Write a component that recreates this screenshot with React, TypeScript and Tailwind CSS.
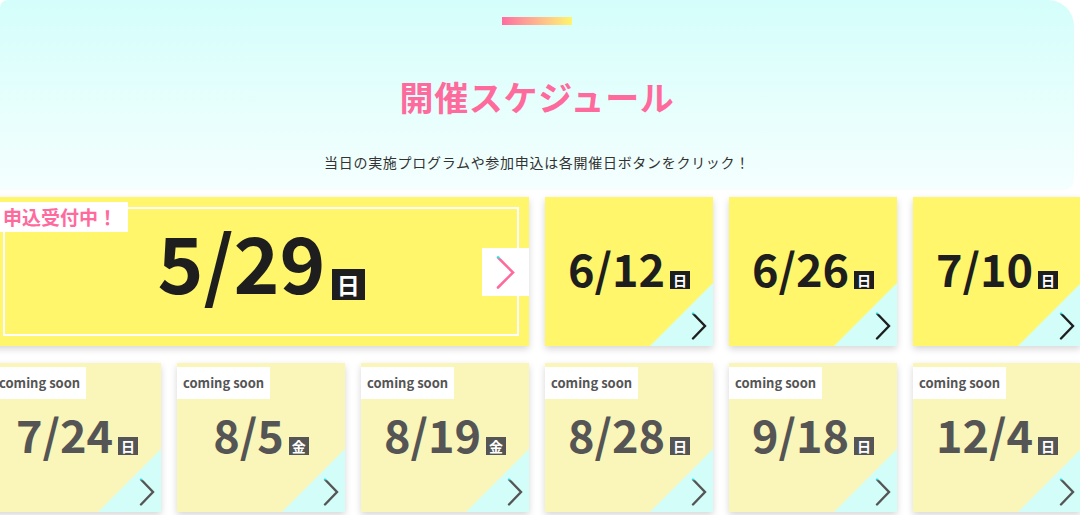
import { useId } from "react";

type Day = { date: string; day: string };

const open: Day[] = [
  { date: "6/12", day: "日" },
  { date: "6/26", day: "日" },
  { date: "7/10", day: "日" },
];

const soon: Day[] = [
  { date: "7/24", day: "日" },
  { date: "8/5", day: "金" },
  { date: "8/19", day: "金" },
  { date: "8/28", day: "日" },
  { date: "9/18", day: "日" },
  { date: "12/4", day: "日" },
];

const Chevron = ({
  color,
  w = 16,
  h = 28,
  stroke = 2.4,
}: {
  color: string;
  w?: number;
  h?: number;
  stroke?: number;
}) => {
  const id = useId();
  return (
    <svg width={w} height={h} viewBox={`0 0 ${w} ${h}`} fill="none">
      <defs>
        <linearGradient id={id} x1="0" y1="0" x2="0" y2={h} gradientUnits="userSpaceOnUse">
          <stop offset="0.05" stopColor="#35dce6" />
          <stop offset="0.1" stopColor={color} />
        </linearGradient>
      </defs>
      <path
        d={`M2 1.5 L${w - 2} ${h / 2} L2 ${h - 1.5}`}
        stroke={`url(#${id})`}
        strokeWidth={stroke}
        strokeLinecap="round"
        strokeLinejoin="miter"
      />
    </svg>
  );
};

const SmallCard = ({ item, soonCard }: { item: Day; soonCard?: boolean }) => {
  return (
    <div
      className={`relative h-[149px] overflow-hidden shadow-[0_3px_7px_rgba(0,0,0,0.16)] ${
        soonCard ? "bg-[#faf6b9]" : "bg-[#fff66c]"
      }`}
    >
      <div className="absolute bottom-0 right-0 w-[63px] h-[63px] bg-[#d3fdf9] [clip-path:polygon(100%_0,100%_100%,0_100%)]" />
      <div className="absolute right-[6px] bottom-[6px]">
        <Chevron color={soonCard ? "#555555" : "#1e1e1e"} />
      </div>
      {soonCard && (
        <div className="absolute top-[4px] left-0 h-[32px] px-[6px] bg-white text-[13px] font-bold leading-[32px] text-[#555555]">
          coming soon
        </div>
      )}
      <div className="relative h-full flex items-center justify-center pb-[9px]">
        <div className={`flex items-end ${soonCard ? "text-[#555555]" : "text-[#1e1e1e]"}`}>
          <span className="text-[45px] font-bold leading-none">{item.date}</span>
          <span
            className={`ml-[5px] mb-[1px] w-[20px] h-[18px] flex items-center justify-center text-[14px] font-bold leading-none text-white ${
              soonCard ? "bg-[#555555]" : "bg-[#1e1e1e]"
            }`}
          >
            {item.day}
          </span>
        </div>
      </div>
    </div>
  );
};

export default function App() {
  return (
    <div className="w-[1080px] h-[515px] overflow-hidden bg-white font-['Noto_Sans_CJK_JP','Noto_Sans',sans-serif]">
      <div className="w-[1074px] h-[190px] rounded-tl-[8px] rounded-tr-[26px] rounded-br-[10px] bg-gradient-to-b from-[#d4fefb] to-[#f4fffe] flex flex-col items-center pt-[17px]">
        <div className="w-[70px] h-[8px] bg-gradient-to-r from-[#ff6b9f] to-[#fff56a]" />
        <h1 className="mt-[55px] text-[34px] font-bold leading-none tracking-[0.02em] text-[#ff6a9d]">
          開催スケジュール
        </h1>
        <p className="mt-[38px] text-[14px] leading-[20px] tracking-[0.05em] text-[#333333]">
          当日の実施プログラムや参加申込は各開催日ボタンをクリック！
        </p>
      </div>

      <div className="mt-[7px] -ml-[7px] w-[1088px] grid grid-cols-6 gap-x-[16px] gap-y-[17px]">
        <div className="col-span-3 relative h-[149px] bg-[#fff66c] p-[10px] shadow-[0_3px_7px_rgba(0,0,0,0.16)]">
          <div className="h-full border-2 border-white flex items-center justify-center pb-[24px]">
            <div className="flex items-end text-[#1e1e1e]">
              <span className="text-[78px] font-bold leading-none">5/29</span>
              <span className="ml-[6px] mb-[-1px] w-[33px] h-[31px] flex items-center justify-center bg-[#1e1e1e] text-[23px] font-bold leading-none text-white">
                日
              </span>
            </div>
          </div>
          <div className="absolute top-[5px] left-0 h-[30px] pl-[10px] pr-[11px] bg-white text-[19px] font-bold leading-[30px] text-[#ff6a9d]">
            申込受付中！
          </div>
          <div className="absolute right-0 top-[51px] w-[47px] h-[48px] bg-white flex items-center justify-center">
            <Chevron color="#ff6a9d" w={19} h={33} stroke={2.6} />
          </div>
        </div>
        {open.map((d) => (
          <SmallCard key={d.date} item={d} />
        ))}
        {soon.map((d) => (
          <SmallCard key={d.date} item={d} soonCard />
        ))}
      </div>
    </div>
  );
}
